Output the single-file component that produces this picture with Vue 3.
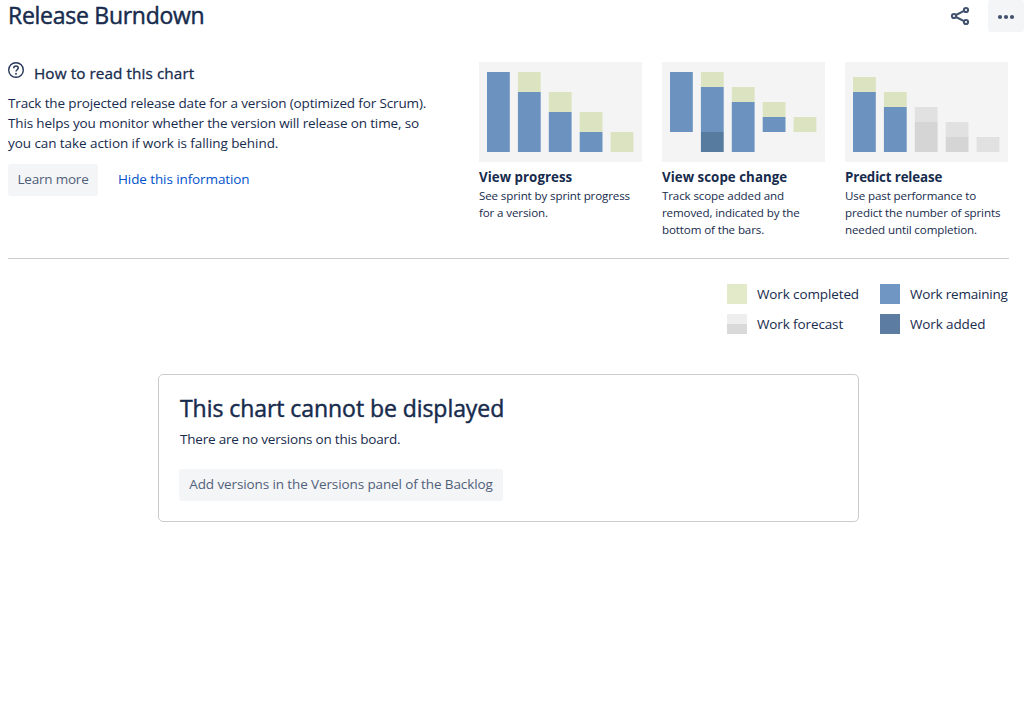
<script setup>
const BAR_WIDTH = 22.8
const BAR_STEP = 30.9

// Each bar is a stack of segments: [kind, top, height]
const guides = [
  {
    title: 'View progress',
    tone: 'progress',
    lines: ['See sprint by sprint progress', 'for a version.'],
    bars: [
      [['remaining', 10, 80]],
      [['completed', 10, 20], ['remaining', 30, 60]],
      [['completed', 30, 20], ['remaining', 50, 40]],
      [['completed', 50, 20], ['remaining', 70, 20]],
      [['completed', 70, 20]],
    ],
  },
  {
    title: 'View scope change',
    tone: 'scope',
    lines: ['Track scope added and', 'removed, indicated by the', 'bottom of the bars.'],
    bars: [
      [['remaining', 10, 60]],
      [['completed', 10, 15], ['remaining', 25, 45], ['added', 70, 20]],
      [['completed', 25, 15], ['remaining', 40, 50]],
      [['completed', 40, 15], ['remaining', 55, 15]],
      [['completed', 55, 15]],
    ],
  },
  {
    title: 'Predict release',
    tone: 'predict',
    lines: ['Use past performance to', 'predict the number of sprints', 'needed until completion.'],
    bars: [
      [['completed', 15, 15], ['remaining', 30, 60]],
      [['completed', 30, 15], ['remaining', 45, 45]],
      [['forecast-light', 45, 15], ['forecast', 60, 30]],
      [['forecast-light', 60, 15], ['forecast', 75, 15]],
      [['forecast-light', 75, 15]],
    ],
  },
]

const legend = [
  { kind: 'completed', label: 'Work completed' },
  { kind: 'remaining', label: 'Work remaining' },
  { kind: 'forecast', label: 'Work forecast' },
  { kind: 'added', label: 'Work added' },
]
</script>

<template>
  <main class="page">
    <header class="header">
      <h1>Release Burndown</h1>
      <div class="actions">
        <button class="icon-button" aria-label="Share">
          <svg width="24" height="24" viewBox="0 0 24 24" fill="none" stroke="#42526e" stroke-width="2">
            <path d="M8 11l8-4.2M8 13l8 4.2" />
            <circle cx="6" cy="12" r="2.1" />
            <circle cx="18" cy="6" r="2.1" />
            <circle cx="18" cy="18" r="2.1" />
          </svg>
        </button>
        <button class="icon-button filled" aria-label="More actions">
          <svg width="24" height="24" viewBox="0 0 24 24" fill="#42526e">
            <circle cx="6" cy="13" r="2.1" />
            <circle cx="12" cy="13" r="2.1" />
            <circle cx="18" cy="13" r="2.1" />
          </svg>
        </button>
      </div>
    </header>

    <section class="intro">
      <div class="about">
        <h2>
          <svg width="16" height="16" viewBox="0 0 16 16" fill="none" stroke="#253858">
            <circle cx="8" cy="8" r="7.3" stroke-width="1.4" />
            <path d="M5.8 6.2C5.8 4.9 6.7 4.1 8 4.1s2.2.8 2.2 2c0 1.6-2.2 1.7-2.2 3.4" stroke-width="1.5" />
            <circle cx="8" cy="11.7" r=".95" fill="#253858" stroke="none" />
          </svg>
          <span>How to read this chart</span>
        </h2>
        <p class="description">
          <span>Track the projected release date for a version (optimized for Scrum).</span>
          <span>This helps you monitor whether the version will release on time, so</span>
          <span>you can take action if work is falling behind.</span>
        </p>
        <div class="links">
          <button class="button learn">Learn more</button>
          <a class="hide">Hide this information</a>
        </div>
      </div>

      <div class="guides">
        <article v-for="guide in guides" :key="guide.title" class="guide" :class="guide.tone">
          <svg class="chart" width="163" height="100" viewBox="0 0 163 100">
            <g v-for="(bar, i) in guide.bars" :key="i">
              <rect
                v-for="[kind, top, height] in bar"
                :key="kind"
                :class="kind"
                :x="8 + i * BAR_STEP"
                :y="top"
                :width="BAR_WIDTH"
                :height="height"
              />
            </g>
          </svg>
          <h3>{{ guide.title }}</h3>
          <p>
            <span v-for="line in guide.lines" :key="line">{{ line }}</span>
          </p>
        </article>
      </div>
    </section>

    <ul class="legend">
      <li v-for="item in legend" :key="item.kind">
        <i :class="item.kind"></i>
        <span>{{ item.label }}</span>
      </li>
    </ul>

    <section class="message">
      <h2>This chart cannot be displayed</h2>
      <p>There are no versions on this board.</p>
      <button class="button backlog">Add versions in the Versions panel of the Backlog</button>
    </section>
  </main>
</template>

<style>
body {
  background: #fff;
}
</style>

<style scoped>
.page {
  box-sizing: border-box;
  width: 1034px;
  height: 728px;
  padding: 0 10px 0 8px;
  overflow: hidden;
  color: #172b4d;
  font-family: "Open Sans", "Noto Sans", sans-serif;
  font-size: 13.5px;
  line-height: 20px;
  white-space: nowrap;
}

h1, h2, h3, p, ul {
  margin: 0;
  padding: 0;
}

button {
  border: 0;
  padding: 0;
  font: inherit;
  color: inherit;
  background: none;
}

.header {
  display: flex;
  justify-content: space-between;
  height: 62px;
}

h1, h2 {
  -webkit-text-stroke: 0.45px currentColor;
}

h1 {
  font-size: 23px;
  font-weight: 500;
  line-height: 31px;
  letter-spacing: -0.27px;
}

.actions {
  display: flex;
  gap: 10px;
}

.icon-button {
  display: flex;
  align-items: center;
  justify-content: center;
  width: 36px;
  height: 32px;
  border-radius: 3px;
}

.icon-button.filled {
  background: #f4f5f7;
}

.intro {
  display: flex;
  box-sizing: border-box;
  width: 1001px;
  height: 197px;
  border-bottom: 1px solid #ccc;
}

.about {
  width: 471px;
}

.about h2 {
  display: flex;
  gap: 10px;
  height: 31px;
  font-size: 15.3px;
  font-weight: 500;
  line-height: 22px;
  -webkit-text-stroke-width: 0.3px;
}

.about h2 span {
  letter-spacing: 0.08px;
}

.description span {
  display: block;
  letter-spacing: -0.14px;
}

.description span:last-child {
  letter-spacing: -0.07px;
}

.links {
  display: flex;
  align-items: center;
  gap: 20px;
  margin-top: 11px;
}

.button {
  display: block;
  height: 32px;
  padding-bottom: 2px;
  border-radius: 3px;
  background: #f4f5f7;
  color: #505f79;
  line-height: 30px;
}

.learn {
  width: 90px;
  letter-spacing: -0.2px;
}

.hide {
  height: 32px;
  color: #0052cc;
  line-height: 30px;
  letter-spacing: -0.1px;
}

.guides {
  display: flex;
  gap: 20px;
}

.guide {
  width: 163px;
}

.chart {
  display: block;
  background: #f4f4f4;
}

.chart .remaining { fill: #6c93c0; }
.chart .completed { fill: #dce3c0; }
.chart .added { fill: #577a9f; }
.chart .forecast-light { fill: #e1e1e1; }
.chart .forecast { fill: #d5d5d5; }

.guide h3 {
  margin-top: 5px;
  font-size: 13.3px;
  font-weight: 700;
  line-height: 20px;
  letter-spacing: 0.04px;
}

.predict h3 {
  letter-spacing: -0.13px;
}

.guide p {
  font-size: 11.6px;
  line-height: 17px;
  letter-spacing: -0.13px;
}

.guide p span {
  display: block;
}

.legend {
  display: grid;
  grid-template-columns: 153px 129px;
  gap: 10px 0;
  width: 282px;
  margin: 25px 0 0 719px;
  list-style: none;
  letter-spacing: -0.12px;
}

.legend li {
  display: flex;
  gap: 10px;
  height: 20px;
}

.legend i {
  flex: none;
  width: 20px;
  height: 20px;
}

.legend li:nth-child(2) {
  letter-spacing: -0.2px;
}

.legend .completed { background: #e3eac9; }
.legend .remaining { background: #7097c3; }
.legend .added { background: #5c7da1; }
.legend .forecast { background: linear-gradient(#eee 50%, #d9d9d9 50%); }

.message {
  box-sizing: border-box;
  width: 701px;
  height: 148px;
  margin: 40px 0 0 150px;
  padding: 20px;
  border: 1px solid #ccc;
  border-radius: 5px;
}

.message h2 {
  padding-left: 1px;
  font-size: 23px;
  font-weight: 500;
  line-height: 26px;
  letter-spacing: -0.06px;
}

.message p {
  margin-top: 8px;
  padding-left: 1px;
  letter-spacing: -0.2px;
}

.backlog {
  width: 324px;
  margin-top: 20px;
  letter-spacing: -0.11px;
}
</style>
